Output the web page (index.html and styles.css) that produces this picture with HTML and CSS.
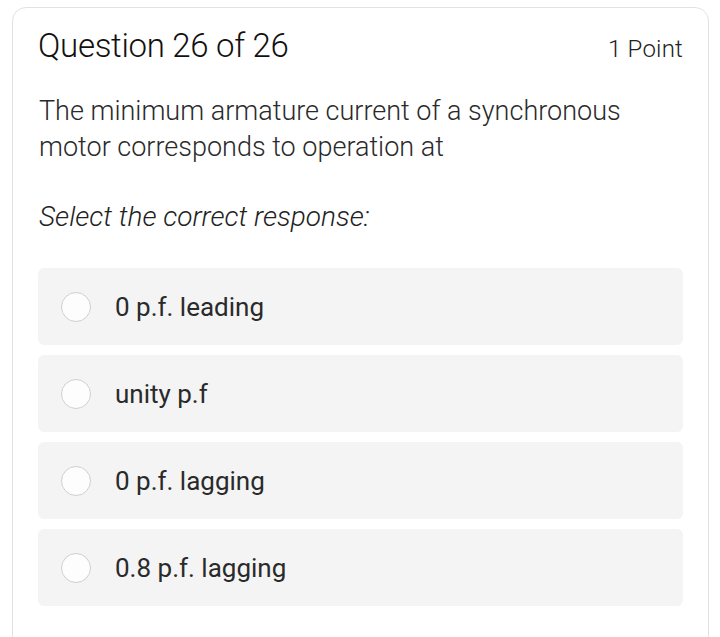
FILE: index.html
```html
<!DOCTYPE html>
<html lang="en">
<head>
    <meta charset="UTF-8">
    <meta name="viewport" content="width=device-width, initial-scale=1.0">
    <title>Question 26 of 26</title>
    <link rel="stylesheet" href="styles.css">
</head>
<body>

<div class="card">
    <div class="card-header">
        <h1 class="question-no">Question 26 of 26</h1>
        <span class="points">1 Point</span>
    </div>

    <p class="question-text">The minimum armature current of a synchronous motor corresponds to operation at</p>

    <p class="instruction">Select the correct response:</p>

    <div class="options">
        <label class="option">
            <span class="radio"></span>
            <span class="option-text">0 p.f. leading</span>
        </label>
        <label class="option">
            <span class="radio"></span>
            <span class="option-text">unity p.f</span>
        </label>
        <label class="option">
            <span class="radio"></span>
            <span class="option-text">0 p.f. lagging</span>
        </label>
        <label class="option">
            <span class="radio"></span>
            <span class="option-text">0.8 p.f. lagging</span>
        </label>
    </div>
</div>

</body>
</html>
```

FILE: styles.css
```css
body {
    font-family: Roboto, "Liberation Sans", sans-serif;
    margin: 0;
    padding: 0;
    background-color: #ffffff;
    color: #1e1e1e;
}
.card {
    margin: 7px 11px 0 12px;
    padding: 18px 25px 40px 25px;
    border: 1px solid #e2e2e2;
    border-radius: 14px;
    height: 700px;
}
.card-header {
    display: flex;
    justify-content: space-between;
    align-items: baseline;
}
.question-no {
    margin: 0;
    font-size: 33px;
    font-weight: 300;
    letter-spacing: -0.3px;
    color: #111;
}
.points {
    font-size: 24px;
    font-weight: 300;
    letter-spacing: 0.2px;
    color: #222;
}
.question-text {
    max-width: 620px;
    margin: 28px 0 0 1px;
    font-size: 27px;
    font-weight: 300;
    line-height: 36px;
    color: #2a2a2a;
}
.instruction {
    margin: 35px 0 0 1px;
    font-size: 28px;
    font-style: italic;
    font-weight: 300;
    color: #222;
}
.options {
    margin-top: 35px;
    display: flex;
    flex-direction: column;
    gap: 10px;
}
.option {
    display: flex;
    align-items: center;
    height: 77px;
    padding-left: 23px;
    background-color: #f4f4f4;
    border-radius: 6px;
    cursor: pointer;
}
.radio {
    width: 28px;
    height: 28px;
    border: 1px solid #cfcfcf;
    border-radius: 50%;
    background-color: #fdfdfd;
}
.option-text {
    margin-left: 24px;
    font-size: 26px;
    color: #2a2a2a;
}
```
